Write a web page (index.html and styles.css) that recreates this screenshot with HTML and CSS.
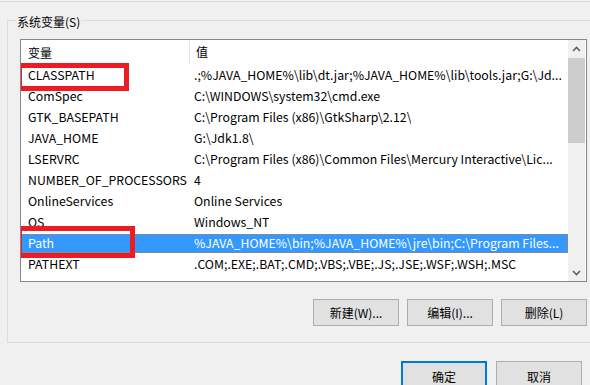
FILE: index.html
```html
<!DOCTYPE html>
<html lang="zh-CN">
<head>
    <meta charset="UTF-8">
    <title>环境变量</title>
    <link rel="stylesheet" href="styles.css">
</head>
<body>

<div class="top-edge"></div>

<div class="group">
    <div class="group-title">系统变量(S)</div>

    <div class="listbox">
        <div class="list-main">
            <div class="list-head">
                <div class="col-name">变量</div>
                <div class="col-value">值</div>
            </div>

            <div class="row">
                <div class="col-name">CLASSPATH</div>
                <div class="col-value">.;%JAVA_HOME%\lib\dt.jar;%JAVA_HOME%\lib\tools.jar;G:\Jd...</div>
                <span class="mark mark-classpath"></span>
            </div>
            <div class="row">
                <div class="col-name">ComSpec</div>
                <div class="col-value">C:\WINDOWS\system32\cmd.exe</div>
            </div>
            <div class="row">
                <div class="col-name">GTK_BASEPATH</div>
                <div class="col-value">C:\Program Files (x86)\GtkSharp\2.12\</div>
            </div>
            <div class="row">
                <div class="col-name">JAVA_HOME</div>
                <div class="col-value">G:\Jdk1.8\</div>
            </div>
            <div class="row">
                <div class="col-name">LSERVRC</div>
                <div class="col-value">C:\Program Files (x86)\Common Files\Mercury Interactive\Lic...</div>
            </div>
            <div class="row">
                <div class="col-name">NUMBER_OF_PROCESSORS</div>
                <div class="col-value">4</div>
            </div>
            <div class="row">
                <div class="col-name">OnlineServices</div>
                <div class="col-value">Online Services</div>
            </div>
            <div class="row">
                <div class="col-name">OS</div>
                <div class="col-value">Windows_NT</div>
            </div>
            <div class="row selected">
                <div class="col-name">Path</div>
                <div class="col-value">%JAVA_HOME%\bin;%JAVA_HOME%\jre\bin;C:\Program Files...</div>
                <span class="mark mark-path"></span>
            </div>
            <div class="row">
                <div class="col-name">PATHEXT</div>
                <div class="col-value">.COM;.EXE;.BAT;.CMD;.VBS;.VBE;.JS;.JSE;.WSF;.WSH;.MSC</div>
            </div>
        </div>

        <div class="scrollbar">
            <div class="arrow">
                <svg width="9" height="6" viewBox="0 0 9 6"><path d="M1 5 L4.5 1.5 L8 5" fill="none" stroke="#606060" stroke-width="1.6"/></svg>
            </div>
            <div class="track">
                <div class="thumb"></div>
            </div>
            <div class="arrow">
                <svg width="9" height="6" viewBox="0 0 9 6"><path d="M1 1 L4.5 4.5 L8 1" fill="none" stroke="#606060" stroke-width="1.6"/></svg>
            </div>
        </div>
    </div>

    <div class="button-row">
        <button>新建(W)...</button>
        <button>编辑(I)...</button>
        <button>删除(L)</button>
    </div>
</div>

<div class="dialog-buttons">
    <button class="default">确定</button>
    <button>取消</button>
</div>

</body>
</html>
```

FILE: styles.css
```css
body {
    margin: 0;
    width: 590px;
    height: 385px;
    overflow: hidden;
    background-color: #f0f0f0;
    color: #000;
    font-family: "Noto Sans CJK SC", "Noto Sans", sans-serif;
    font-size: 12px;
}

.top-edge {
    height: 1px;
    border-bottom: 1px solid #dcdcdc;
}

/* group box "系统变量" */
.group {
    margin: 18px 0 0 7px;
    width: 570px;
    border: 1px solid #dcdcdc;
    border-right: none;
    padding: 0 0 16px 12px;
}

.group-title {
    display: inline-block;
    margin: -7px 0 0 -4px;
    padding: 0 1px;
    line-height: 16px;
    background-color: #f0f0f0;
    vertical-align: top;
}

/* list view */
.listbox {
    display: flex;
    width: 565px;
    height: 241px;
    margin-top: 1px;
    border: 1px solid #828790;
    background-color: #fff;
    overflow: hidden;
}

.list-main {
    flex: 1;
}

.list-head {
    display: flex;
    height: 25px;
    line-height: 23px;
}

.list-head .col-name {
    border-right: 1px solid #e5e5e5;
    margin-top: 1px;
    height: 23px;
}

.row {
    position: relative;
    display: flex;
    height: 21px;
    line-height: 21px;
    font-size: 12.3px;
}

.col-name {
    width: 161px;
    padding-left: 7px;
    flex-shrink: 0;
    white-space: nowrap;
}

.col-value {
    padding-left: 5px;
    white-space: nowrap;
    overflow: hidden;
}

.list-head .col-value {
    padding-left: 6px;
}

.row.selected {
    background-color: #3399ff;
    color: #fff;
    height: 19px;
    line-height: 19px;
    margin: 1px 0;
    outline: 1px dotted #d07a2a;
    outline-offset: -1px;
}

/* red annotation boxes drawn over the list */
.mark {
    position: absolute;
    border: 5px solid #ed1c24;
}

.mark-classpath {
    left: -4px;
    top: -2px;
    width: 102px;
    height: 18px;
}

.mark-path {
    left: -4px;
    top: -8px;
    width: 108px;
    height: 22px;
}

/* scrollbar */
.scrollbar {
    display: flex;
    flex-direction: column;
    width: 17px;
    margin-right: 1px;
    background-color: #f0f0f0;
}

.arrow {
    height: 17px;
    display: flex;
    align-items: center;
    justify-content: center;
}

.track {
    flex: 1;
}

.thumb {
    height: 85px;
    margin: 1px 0 0;
    background-color: #cdcdcd;
}

/* buttons */
button {
    width: 86px;
    height: 27px;
    padding: 0;
    border: 1px solid #adadad;
    background-color: #e1e1e1;
    color: #000;
    font-family: "Noto Sans CJK SC", "Noto Sans", sans-serif;
    font-size: 12px;
}

.button-row {
    display: flex;
    justify-content: flex-end;
    gap: 8px;
    width: 567px;
    margin-top: 17px;
}

.dialog-buttons {
    display: flex;
    gap: 9px;
    margin: 18px 0 0 401px;
}

.dialog-buttons button {
    height: 30px;
}

.dialog-buttons button.default {
    border: 2px solid #0078d7;
}
```
